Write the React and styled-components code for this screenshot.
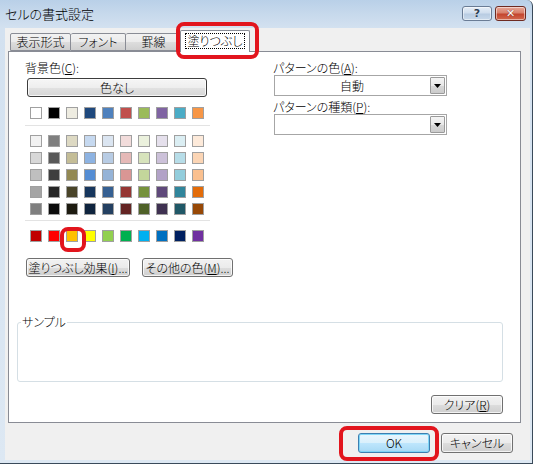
import React from "react";
import styled, { createGlobalStyle } from "styled-components";

const Global = createGlobalStyle`
  html, body { margin: 0; padding: 0; background: #ffffff; }
  body {
    font-family: "Noto Sans CJK JP", "Noto Sans", sans-serif;
    font-size: 12px;
    font-weight: 300;
    color: #000;
    font-feature-settings: "palt";
  }
  #root { width: 533px; height: 464px; }
`;

const Window = styled.div`
  position: relative;
  width: 533px;
  height: 464px;
  overflow: hidden;
  box-sizing: border-box;
  background: linear-gradient(180deg, #b9d0e8 0px, #c7d9ec 14px, #d3e1f0 28px, #dde8f3 100%);
  border-right: 1px solid #3a4a5a;
  border-bottom: 1px solid #3a4a5a;
  border-top-right-radius: 6px;
  display: flex;
  flex-direction: column;
`;

const TitleBar = styled.div`
  height: 28px;
  flex: none;
  display: flex;
  align-items: flex-start;
  justify-content: space-between;
  padding: 0 6px 0 5px;
`;

const Title = styled.div`
  margin-top: 6px;
  font-size: 13px;
  line-height: 16px;
  color: #000;
`;

const CaptionButtons = styled.div`
  display: flex;
  gap: 3px;
  margin-top: 6px;
`;

const CaptionButton = styled.div`
  width: ${(p) => (p.$close ? "31px" : "30px")};
  height: 15px;
  box-sizing: border-box;
  border: 1px solid ${(p) => (p.$close ? "#6e2b22" : "#6a7c95")};
  border-radius: 3px;
  background: ${(p) =>
    p.$close
      ? "linear-gradient(180deg, #e8a898 0%, #d8806c 45%, #c4452e 55%, #d2694f 100%)"
      : "linear-gradient(180deg, #e6eef7 0%, #d0deee 45%, #b8cce2 55%, #c9d9ea 100%)"};
  box-shadow: inset 0 0 0 1px rgba(255, 255, 255, 0.5);
  display: flex;
  align-items: center;
  justify-content: center;
  font-family: "DejaVu Sans", sans-serif;
  font-weight: bold;
  font-size: 11px;
  line-height: 11px;
  color: ${(p) => (p.$close ? "#ffffff" : "#2d3e55")};
  text-shadow: ${(p) => (p.$close ? "0 0 1px #5a1a10" : "0 0 1px #ffffff")};
`;

const Client = styled.div`
  flex: 1;
  margin: 0 2px 3px 5px;
  background: #f0f0f0;
  display: flex;
  flex-direction: column;
`;

const TabStrip = styled.div`
  height: 23px;
  flex: none;
  display: flex;
  align-items: flex-end;
  padding-left: 5px;
  position: relative;
  z-index: 1;
`;

const Tab = styled.div`
  box-sizing: border-box;
  height: ${(p) => (p.$active ? "22px" : "18px")};
  margin: ${(p) => (p.$active ? "0 -2px -1px -2px" : "0")};
  padding: ${(p) => (p.$active ? "2px 4px 0" : "0 6px")};
  width: ${(p) => p.$w}px;
  border: 1px solid #898c95;
  border-bottom: ${(p) => (p.$active ? "none" : "1px solid #898c95")};
  border-left-width: ${(p) => (p.$first || p.$active ? "1px" : "0")};
  border-radius: 2px 2px 0 0;
  background: ${(p) =>
    p.$active ? "#ffffff" : "linear-gradient(180deg, #f2f2f2 0%, #ebebeb 50%, #dddddd 51%, #cfcfcf 100%)"};
  display: flex;
  align-items: ${(p) => (p.$active ? "flex-start" : "center")};
  justify-content: center;
  font-size: 12px;
  line-height: 14px;
  white-space: nowrap;
`;

const FocusText = styled.span`
  outline: 1px dotted #000;
  outline-offset: 0;
  padding: 0 2px;
  margin-top: 1px;
  line-height: 14px;
`;

const Panel = styled.div`
  box-sizing: border-box;
  margin-left: 3px;
  width: 513px;
  height: 372px;
  flex: none;
  background: #ffffff;
  border: 1px solid #898c95;
  padding: 9px 17px 0 8px;
  display: flex;
  flex-direction: column;
`;

const TopSection = styled.div`
  display: flex;
  padding-left: 8px;
`;

const LeftColumn = styled.div`
  width: 248px;
  display: flex;
  flex-direction: column;
`;

const RightColumn = styled.div`
  display: flex;
  flex-direction: column;
`;

const Label = styled.div`
  line-height: 14px;
  height: 14px;
  margin-top: ${(p) => p.$mt || 0}px;
  white-space: nowrap;
`;

const U = styled.span`
  text-decoration: underline;
`;

const Button = styled.div`
  box-sizing: border-box;
  width: ${(p) => p.$w}px;
  height: ${(p) => p.$h || 19}px;
  margin-top: ${(p) => p.$mt || 0}px;
  margin-left: ${(p) => p.$ml || 0}px;
  border: 1px solid ${(p) => (p.$default ? "#3c7fb1" : "#707070")};
  border-radius: 3px;
  background: ${(p) =>
    p.$default
      ? "linear-gradient(180deg, #eaf6fd 0%, #d9f0fc 50%, #bee6fd 51%, #a7d9f5 100%)"
      : "linear-gradient(180deg, #f2f2f2 0%, #ebebeb 50%, #dddddd 51%, #cfcfcf 100%)"};
  box-shadow: inset 0 0 0 1px ${(p) => (p.$default ? "#7fd6f7" : "rgba(255,255,255,0.75)")};
  display: flex;
  align-items: center;
  justify-content: center;
  font-size: 12px;
  line-height: 14px;
  white-space: nowrap;
  flex: none;
`;

const NoColorButton = styled(Button)`
  border-color: #3c3c3c;
  border-radius: 3px;
  background: linear-gradient(180deg, #f6f6f6 0%, #eeeeee 50%, #e2e2e2 51%, #d6d6d6 100%);
`;

const SwatchRow = styled.div`
  display: flex;
  gap: 6px;
  padding-left: 5px;
  margin-top: ${(p) => p.$mt || 0}px;
`;

const SwatchGrid = styled.div`
  display: grid;
  grid-template-columns: repeat(10, 12px);
  grid-auto-rows: 12px;
  column-gap: 6px;
  row-gap: 5px;
  padding-left: 5px;
  margin-top: ${(p) => p.$mt || 0}px;
`;

const Swatch = styled.div`
  box-sizing: border-box;
  width: 12px;
  height: 12px;
  border: 1px solid #a0a0a0;
  background: ${(p) => p.$c};
`;

const Separator = styled.div`
  width: 185px;
  height: 1px;
  background: #e3e3e3;
  margin-top: ${(p) => p.$mt || 0}px;
`;

const ButtonRow = styled.div`
  display: flex;
  margin-top: ${(p) => p.$mt || 0}px;
  width: 300px;
`;

const Combo = styled.div`
  box-sizing: border-box;
  width: 173px;
  height: 21px;
  margin-left: 1px;
  border: 1px solid #a6a6a6;
  background: #ffffff;
  display: flex;
  align-items: stretch;
`;

const ComboText = styled.div`
  flex: 1;
  display: flex;
  align-items: center;
  justify-content: center;
  font-size: 12px;
  line-height: 14px;
`;

const ComboArrow = styled.div`
  box-sizing: border-box;
  width: 15px;
  margin: 1px;
  border: 1px solid #9a9a9a;
  border-radius: 1px;
  background: linear-gradient(180deg, #f4f4f4 0%, #e8e8e8 50%, #d8d8d8 51%, #cbcbcb 100%);
  display: flex;
  align-items: center;
  justify-content: center;
`;

const Group = styled.fieldset`
  box-sizing: border-box;
  margin: 38px 0 0 0;
  padding: 0;
  height: 67px;
  border: 1px solid #d5dfe5;
  border-radius: 3px;
  min-width: 0;
`;

const Legend = styled.legend`
  margin-left: 3px;
  padding: 0 1px 0 1px;
  font-size: 12px;
  line-height: 14px;
`;

const ClearRow = styled.div`
  display: flex;
  justify-content: flex-end;
  margin-top: 13px;
`;

const Footer = styled.div`
  display: flex;
  justify-content: flex-end;
  gap: 11px;
  padding: 10px 17px 0 0;
`;

const Annotation = styled.div`
  position: absolute;
  box-sizing: border-box;
  border: 4px solid #e2151d;
  border-radius: 8px;
  pointer-events: none;
  z-index: 5;
`;

const themeTop = ["#FFFFFF", "#000000", "#EEECE1", "#1F497D", "#4F81BD", "#C0504D", "#9BBB59", "#8064A2", "#4BACC6", "#F79646"];
const tints = [
  ["#F2F2F2", "#7F7F7F", "#DDD9C3", "#C6D9F0", "#DBE5F1", "#F2DCDB", "#EBF1DD", "#E5E0EC", "#DBEEF3", "#FDEADA"],
  ["#D8D8D8", "#595959", "#C4BD97", "#8DB3E2", "#B8CCE4", "#E5B9B7", "#D7E3BC", "#CCC1D9", "#B7DDE8", "#FBD5B5"],
  ["#BFBFBF", "#3F3F3F", "#938953", "#548DD4", "#95B3D7", "#D99694", "#C3D69B", "#B2A2C7", "#92CDDC", "#FAC08F"],
  ["#A5A5A5", "#262626", "#494429", "#17365D", "#366092", "#953734", "#76923C", "#5F497A", "#31859B", "#E36C09"],
  ["#7F7F7F", "#0C0C0C", "#1D1B10", "#0F243E", "#244061", "#632423", "#4F6128", "#3F3151", "#205867", "#974806"],
];
const standard = ["#C00000", "#FF0000", "#FFC000", "#FFFF00", "#92D050", "#00B050", "#00B0F0", "#0070C0", "#002060", "#7030A0"];

const Arrow = () => (
  <svg width="7" height="4" viewBox="0 0 7 4">
    <path d="M0 0 H7 L3.5 4 Z" fill="#000" />
  </svg>
);

export default function App() {
  return (
    <>
      <Global />
      <Window>
        <TitleBar>
          <Title>セルの書式設定</Title>
          <CaptionButtons>
            <CaptionButton>?</CaptionButton>
            <CaptionButton $close>✕</CaptionButton>
          </CaptionButtons>
        </TitleBar>
        <Client>
          <TabStrip>
            <Tab $first $w={61}>表示形式</Tab>
            <Tab $w={55}>フォント</Tab>
            <Tab $w={56}>罫線</Tab>
            <Tab $active $w={70}>
              <FocusText>塗りつぶし</FocusText>
            </Tab>
          </TabStrip>
          <Panel>
            <TopSection>
              <LeftColumn>
                <Label>
                  背景色(<U>C</U>):
                </Label>
                <NoColorButton $w={180} $mt={3} $ml={2}>
                  色なし
                </NoColorButton>
                <SwatchRow $mt={10}>
                  {themeTop.map((c) => (
                    <Swatch key={c} $c={c} />
                  ))}
                </SwatchRow>
                <Separator $mt={6} />
                <SwatchGrid $mt={9}>
                  {tints.flat().map((c, i) => (
                    <Swatch key={i} $c={c} />
                  ))}
                </SwatchGrid>
                <Separator $mt={5} />
                <SwatchRow $mt={9}>
                  {standard.map((c) => (
                    <Swatch key={c} $c={c} />
                  ))}
                </SwatchRow>
                <ButtonRow $mt={16}>
                  <Button $w={104} $ml={1}>
                    塗りつぶし効果(<U>I</U>)...
                  </Button>
                  <Button $w={91} $ml={12}>
                    その他の色(<U>M</U>)...
                  </Button>
                </ButtonRow>
              </LeftColumn>
              <RightColumn>
                <Label>
                  パターンの色(<U>A</U>):
                </Label>
                <Combo>
                  <ComboText>自動</ComboText>
                  <ComboArrow>
                    <Arrow />
                  </ComboArrow>
                </Combo>
                <Label $mt={4}>
                  パターンの種類(<U>P</U>):
                </Label>
                <Combo>
                  <ComboText />
                  <ComboArrow>
                    <Arrow />
                  </ComboArrow>
                </Combo>
              </RightColumn>
            </TopSection>
            <Group>
              <Legend>サンプル</Legend>
            </Group>
            <ClearRow>
              <Button $w={72}>
                クリア(<U>R</U>)
              </Button>
            </ClearRow>
          </Panel>
          <Footer>
            <Button $w={72} $h={20} $default>
              OK
            </Button>
            <Button $w={72} $h={20}>
              キャンセル
            </Button>
          </Footer>
        </Client>
        <Annotation style={{ left: 176, top: 22, width: 83, height: 37 }} />
        <Annotation style={{ left: 60, top: 227, width: 26, height: 25 }} />
        <Annotation style={{ left: 339, top: 426, width: 100, height: 35 }} />
      </Window>
    </>
  );
}
